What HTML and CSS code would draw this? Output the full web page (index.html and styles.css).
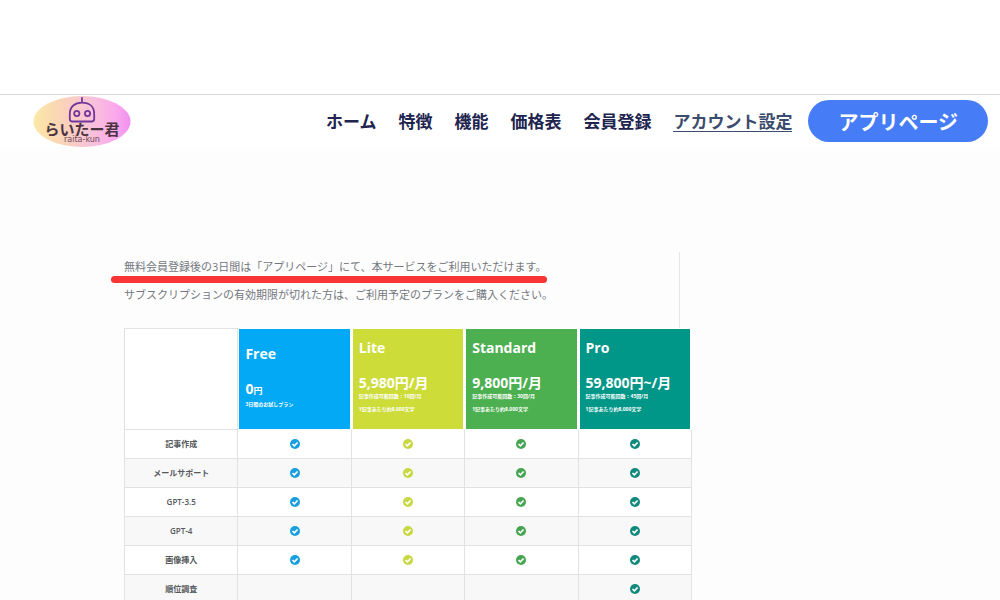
FILE: index.html
```html
<!DOCTYPE html>
<html lang="ja">
<head>
<meta charset="utf-8">
<meta name="viewport" content="width=device-width, initial-scale=1">
<title>らいたー君 アカウント設定</title>
<link rel="stylesheet" href="styles.css">
</head>
<body>
<svg class="defs" aria-hidden="true">
  <symbol id="check" viewBox="0 0 20 20">
    <circle cx="10" cy="10" r="10" fill="currentColor"/>
    <path d="M5 10l3.7 3.7L15.2 7" fill="none" stroke="#fff" stroke-width="3.4"/>
  </symbol>
</svg>
<header class="site-header">
  <a class="logo" href="#" aria-label="らいたー君">
    <svg class="logo-art" viewBox="0 0 98 52">
      <defs>
        <linearGradient id="oval" x1="0" y1="0" x2="1" y2="0">
          <stop offset="0" stop-color="#fbe8a6"/>
          <stop offset=".3" stop-color="#fad3b8"/>
          <stop offset=".6" stop-color="#f8c2da"/>
          <stop offset=".85" stop-color="#fba8ed"/>
          <stop offset="1" stop-color="#f090ee"/>
        </linearGradient>
      </defs>
      <ellipse cx="49" cy="26.500" rx="48.5" ry="25.5" fill="url(#oval)"/>
      <g fill="none" stroke="#71379b" stroke-width="1.8" stroke-linecap="round">
        <path d="M49 3V7.500M36.800 24V19C36.800 11.500 42 7.700 49 7.700S61.200 11.500 61.200 19V24Q61.200 26.500 58.500 26.500H39.500Q36.800 26.500 36.800 24Z"/>
        <circle cx="43.800" cy="18.500" r="2.600"/>
        <circle cx="54.500" cy="18.500" r="2.600"/>
      </g>
      <text class="logo-name" x="49" y="39.500" text-anchor="middle">らいたー君</text>
      <text class="logo-sub" x="49" y="47" text-anchor="middle">raita-kun</text>
    </svg>
  </a>
  <nav class="nav">
    <a href="#">ホーム</a>
    <a href="#">特徴</a>
    <a href="#">機能</a>
    <a href="#">価格表</a>
    <a href="#">会員登録</a>
    <a class="current" href="#">アカウント設定</a>
  </nav>
  <button class="app-button" type="button">アプリページ</button>
</header>
<main class="content">
  <section class="intro">
    <p><span class="marked">無料会員登録後の3日間は「アプリページ」にて、本サービスをご利用いただけます。</span></p>
    <p>サブスクリプションの有効期限が切れた方は、ご利用予定のプランをご購入ください。</p>
  </section>
  <table class="plans">
    <thead>
      <tr>
        <td></td>
        <th scope="col"><div class="plan free"><h2>Free</h2><p class="price">0<small>円</small></p><p class="note">3日間のお試しプラン</p></div></th>
        <th scope="col"><div class="plan lite"><h2>Lite</h2><p class="price">5,980円/月</p><p class="note">記事作成可能回数：10回/月</p><p class="note">1記事あたり約8,000文字</p></div></th>
        <th scope="col"><div class="plan standard"><h2>Standard</h2><p class="price">9,800円/月</p><p class="note">記事作成可能回数：30回/月</p><p class="note">1記事あたり約8,000文字</p></div></th>
        <th scope="col"><div class="plan pro"><h2>Pro</h2><p class="price">59,800円~/月</p><p class="note">記事作成可能回数：45回/月</p><p class="note">1記事あたり約8,000文字</p></div></th>
      </tr>
    </thead>
    <tbody>
      <tr><th scope="row">記事作成</th><td><svg class="check"><use href="#check"/></svg></td><td><svg class="check"><use href="#check"/></svg></td><td><svg class="check"><use href="#check"/></svg></td><td><svg class="check"><use href="#check"/></svg></td></tr>
      <tr><th scope="row">メールサポート</th><td><svg class="check"><use href="#check"/></svg></td><td><svg class="check"><use href="#check"/></svg></td><td><svg class="check"><use href="#check"/></svg></td><td><svg class="check"><use href="#check"/></svg></td></tr>
      <tr><th scope="row">GPT-3.5</th><td><svg class="check"><use href="#check"/></svg></td><td><svg class="check"><use href="#check"/></svg></td><td><svg class="check"><use href="#check"/></svg></td><td><svg class="check"><use href="#check"/></svg></td></tr>
      <tr><th scope="row">GPT-4</th><td><svg class="check"><use href="#check"/></svg></td><td><svg class="check"><use href="#check"/></svg></td><td><svg class="check"><use href="#check"/></svg></td><td><svg class="check"><use href="#check"/></svg></td></tr>
      <tr><th scope="row">画像挿入</th><td><svg class="check"><use href="#check"/></svg></td><td><svg class="check"><use href="#check"/></svg></td><td><svg class="check"><use href="#check"/></svg></td><td><svg class="check"><use href="#check"/></svg></td></tr>
      <tr><th scope="row">順位調査</th><td></td><td></td><td></td><td><svg class="check"><use href="#check"/></svg></td></tr>
    </tbody>
  </table>
</main>
</body>
</html>
```

FILE: styles.css
```css
* {
  box-sizing: border-box;
}

body {
  margin: 0;
  padding-top: 94px;
  background: #fff;
  color: #74777e;
  font-family: "Open Sans", "Noto Sans CJK JP", sans-serif;
}

h2,
p {
  margin: 0;
}

.defs {
  position: absolute;
  width: 0;
  height: 0;
}

.site-header {
  display: flex;
  align-items: center;
  justify-content: flex-end;
  min-height: 53px;
  padding: 0 12px 0 33px;
  border-top: 1px solid #d8d8d8;
  background: #fff;
  font-family: "Noto Sans CJK JP", sans-serif;
}

.logo {
  margin-right: auto;
}

.logo-art {
  display: block;
  width: 98px;
  height: 52px;
}

.logo-name {
  fill: #4c3340;
  font-size: 15px;
  font-weight: 700;
}

.logo-sub {
  fill: #6d4a5c;
  font-family: "DejaVu Sans", sans-serif;
  font-size: 8px;
}

.nav {
  display: flex;
  gap: 22px;
}

.nav a {
  color: #20244f;
  font-size: 17px;
  font-weight: 700;
  line-height: 20px;
  text-decoration: none;
  white-space: nowrap;
}

.nav .current {
  border-bottom: 1px solid #3c4c6c;
  color: #3c4c6c;
}

.app-button {
  height: 42px;
  margin-left: 16px;
  padding: 0 30px;
  border: 0;
  border-radius: 21px;
  background: #467df7;
  color: #fff;
  font-family: inherit;
  font-size: 20px;
  font-weight: 700;
  white-space: nowrap;
}

.content {
  padding: 105px 0 0 124px;
  background: #fdfdfd;
}

.intro {
  max-width: 556px;
  height: 76px;
  padding-top: 1px;
  border-right: 1px solid #e6e6e6;
  font-size: 11px;
  line-height: 28px;
}

.marked {
  position: relative;
}

.marked::after {
  content: "";
  position: absolute;
  top: 17px;
  left: -13px;
  right: -1px;
  height: 7px;
  border-radius: 4px;
  background: #f93434;
}

.plans {
  width: 568px;
  border-collapse: collapse;
  table-layout: fixed;
  background: #fff;
}

.plans th,
.plans td {
  height: 29px;
  padding: 0;
  border: 1px solid #e2e2e2;
  font-size: 8px;
  line-height: 12px;
  text-align: center;
  vertical-align: middle;
}

.plans thead th {
  padding: 0 1px;
  border-color: #fff;
  vertical-align: top;
}

.plans tbody tr:nth-child(even) {
  background: #f8f8f8;
}

.plans tbody th {
  color: #55585c;
  font-weight: 600;
}

.plan {
  display: flex;
  flex-direction: column;
  justify-content: center;
  height: 100px;
  padding: 0 6px 8px;
  color: #fff;
  text-align: left;
}

.plan h2 {
  margin-bottom: 15px;
  font-size: 14px;
  line-height: 20px;
}

.price {
  font-size: 14px;
  line-height: 20px;
  white-space: nowrap;
}

.price small {
  font-size: 9px;
}

.note {
  font-size: 5px;
  line-height: 6px;
  white-space: nowrap;
}

.note + .note {
  margin-top: 7px;
}

.free {
  background: #03a9f4;
}

.lite {
  background: #cddc39;
}

.standard {
  background: #4caf50;
}

.pro {
  background: #009688;
}

.check {
  display: block;
  width: 10px;
  height: 10px;
  margin: 0 auto;
}

.plans td:nth-child(2) {
  color: #189fdf;
}

.plans td:nth-child(3) {
  color: #c6d842;
}

.plans td:nth-child(4) {
  color: #46a552;
}

.plans td:nth-child(5) {
  color: #11897d;
}
```
